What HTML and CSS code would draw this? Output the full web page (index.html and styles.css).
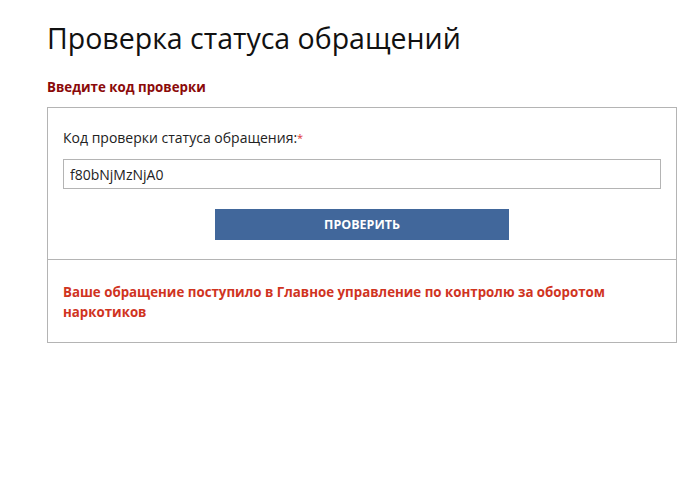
FILE: index.html
```html
<!DOCTYPE html>
<html lang="ru">
  <head>
    <meta charset="UTF-8" />
    <meta name="viewport" content="width=device-width, initial-scale=1.0" />
    <title>Проверка статуса обращений</title>
    <link rel="stylesheet" href="styles.css">
  </head>
  <body>
    <div class="page">
      <h1>Проверка статуса обращений</h1>
      <h3 class="subtitle">Введите код проверки</h3>

      <div class="check-box">
        <form class="check-form">
          <label for="code">Код проверки статуса обращения:<span class="req">*</span></label>
          <input type="text" id="code" value="f80bNjMzNjA0" />
          <div class="actions">
            <button type="submit">Проверить</button>
          </div>
        </form>
        <div class="result">
          Ваше обращение поступило в Главное управление по контролю за оборотом наркотиков
        </div>
      </div>
    </div>
  </body>
</html>
```

FILE: styles.css
```css
* {
  margin: 0;
  padding: 0;
  box-sizing: border-box;
}
body {
  font-family: "Open Sans", Arial, sans-serif;
  color: #222;
  background: #fff;
}
.page {
  padding: 16px 6px 0 47px;
}
h1 {
  font-size: 28.5px;
  font-weight: 400;
  line-height: 44px;
  color: #111;
}
.subtitle {
  margin-top: 17px;
  font-size: 13.3px;
  font-weight: 700;
  color: #8b0a0a;
  line-height: 20px;
}
.check-box {
  margin-top: 10px;
  border: 1px solid #b4b4b4;
}
.check-form {
  padding: 20px 15px 19px;
}
label {
  display: block;
  font-size: 14px;
  line-height: 20px;
  color: #222;
}
.req {
  color: #d33;
  font-size: 11px;
  vertical-align: top;
}
input {
  display: block;
  width: 100%;
  height: 30px;
  margin-top: 11px;
  padding: 0 6px;
  border: 1px solid #b4b4b4;
  font-family: inherit;
  font-size: 14px;
  color: #222;
}
.actions {
  display: flex;
  justify-content: center;
  margin-top: 20px;
}
button {
  width: 294px;
  height: 31px;
  border: none;
  background: #41679b;
  color: #fff;
  font-family: inherit;
  font-size: 12.5px;
  font-weight: 700;
  text-transform: uppercase;
}
.result {
  border-top: 1px solid #b4b4b4;
  padding: 22px 15px 20px;
  font-size: 13.3px;
  font-weight: 700;
  line-height: 20px;
  color: #d0341f;
}
```
